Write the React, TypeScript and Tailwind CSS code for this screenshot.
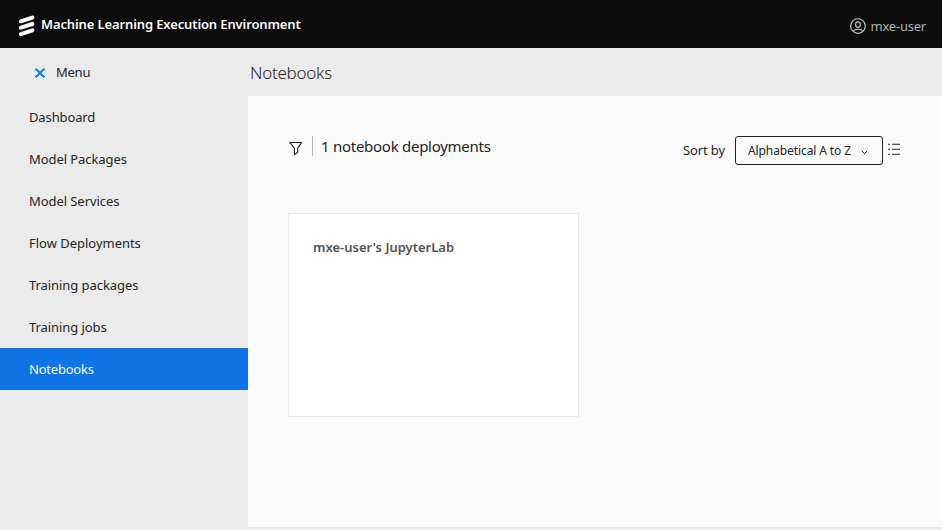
const items = [
  { label: "Dashboard", tracking: "tracking-[-0.12px]" },
  { label: "Model Packages", tracking: "tracking-[-0.07px]" },
  { label: "Model Services", tracking: "tracking-[-0.07px]" },
  { label: "Flow Deployments", tracking: "tracking-[-0.02px]" },
  { label: "Training packages", tracking: "tracking-[-0.06px]" },
  { label: "Training jobs", tracking: "tracking-[-0.08px]" },
  { label: "Notebooks", tracking: "tracking-[-0.22px]", active: true },
];

function BrandMark() {
  return (
    <svg className="h-[22px] w-[18px]" viewBox="0 0 18 22" fill="none" stroke="#fff" strokeWidth="4" strokeLinecap="round">
      <path d="M2.8 6.3 14.4 2.6M2.8 12.7 14.4 9M2.8 19.1 14.4 15.4" />
    </svg>
  );
}

function ProfileIcon() {
  return (
    <svg className="h-4 w-4" viewBox="0 0 16 16" fill="none" stroke="#c8c8c8" strokeWidth="1.15">
      <circle cx="8" cy="8" r="7.3" />
      <ellipse cx="8" cy="6.6" rx="2.4" ry="2.8" />
      <path d="M3.6 13.2c.3-1.5 1.9-2 4.4-2s4.1.5 4.4 2" />
    </svg>
  );
}

export default function App() {
  return (
    <div className="flex h-[530px] w-[942px] flex-col overflow-hidden bg-[#ebebeb] font-['Noto_Sans',sans-serif] text-[13px] text-[#242424]">
      <header className="flex h-12 shrink-0 items-center justify-between bg-[#0c0c0c] pr-4 pl-[18px]">
        <div className="flex items-center gap-[5px]">
          <div className="pt-1"><BrandMark /></div>
          <h1 className="pt-0.5 text-[13px] font-semibold tracking-[-0.12px] whitespace-nowrap text-[#fafafa]">Machine Learning Execution Environment</h1>
        </div>
        <div className="flex items-center gap-[5px] pt-1">
          <ProfileIcon />
          <span className="pt-0.5 tracking-[-0.22px] whitespace-nowrap text-[#b0b0b0]">mxe-user</span>
        </div>
      </header>
      <div className="flex min-h-0 flex-1">
        <aside className="w-[248px] shrink-0">
          <div className="flex h-12 items-center gap-[11px] pt-0.5 pl-[35px]">
            <svg className="h-2.5 w-2.5" viewBox="0 0 10 10" stroke="#0d82f0" strokeWidth="2">
              <path d="m.6.6 8.8 8.8M9.4.6.6 9.4" />
            </svg>
            <span className="tracking-[-0.25px]">Menu</span>
          </div>
          <nav>
            {items.map((item) => (
              <a
                key={item.label}
                className={`flex h-[42px] items-center pt-0.5 pl-[29px] whitespace-nowrap ${item.tracking} ${item.active ? "bg-[#1174e6] text-[#fafafa]" : ""}`}
              >
                {item.label}
              </a>
            ))}
          </nav>
        </aside>
        <main className="flex flex-1 flex-col pb-[3px]">
          <h2 className="flex h-12 shrink-0 items-center pt-0.5 pl-0.5 text-[17px] font-light tracking-[-0.25px]">Notebooks</h2>
          <section className="flex-1 bg-[#fafafa] px-10 pt-10">
            <div className="flex h-[30px] items-start justify-between">
              <div className="flex h-5 items-center">
                <svg className="mt-1 ml-px h-[15px] w-[14px]" viewBox="0 0 14 15" fill="none" stroke="#242424" strokeWidth="1.15">
                  <path d="M1 1.5h11.5L8.7 7.2v4L5.4 13.7V7.2z" />
                </svg>
                <div className="mr-2 ml-[9px] h-5 w-px bg-[#b5b5b5]" />
                <span className="text-[15px] tracking-[-0.27px] whitespace-nowrap">1 notebook deployments</span>
              </div>
              <div className="flex items-center">
                <span className="mr-2.5 tracking-[-0.12px] whitespace-nowrap">Sort by</span>
                <button className="flex h-[29px] w-[148px] items-center rounded-[3px] border border-[#242424] pl-3 text-[12px]">
                  <span className="w-[113px] text-left tracking-[-0.1px] whitespace-nowrap">Alphabetical A to Z</span>
                  <svg className="mt-[3px] h-[5px] w-[7px]" viewBox="0 0 7 5" fill="none" stroke="#242424">
                    <path d="m.7.8 2.8 2.8L6.3.8" />
                  </svg>
                </button>
                <svg className="mr-[1px] mb-[2px] ml-[5px] h-[13px] w-[13px]" viewBox="0 0 13 13" shapeRendering="crispEdges">
                  <path stroke="#c9c9c9" d="M0 .5h2M4 .5h8M0 5.5h2M4 5.5h8M0 10.5h2M4 10.5h8" />
                  <path stroke="#555" d="M0 1.5h2M4 1.5h8M0 6.5h2M4 6.5h8M0 11.5h2M4 11.5h8" />
                </svg>
              </div>
            </div>
            <article className="mt-[47px] h-[204px] w-[291px] border border-[#ebebeb] bg-white pt-[23px] pl-6">
              <h3 className="text-[13px] leading-5 font-semibold whitespace-nowrap text-[#555]">mxe-user's JupyterLab</h3>
            </article>
          </section>
        </main>
      </div>
    </div>
  );
}
